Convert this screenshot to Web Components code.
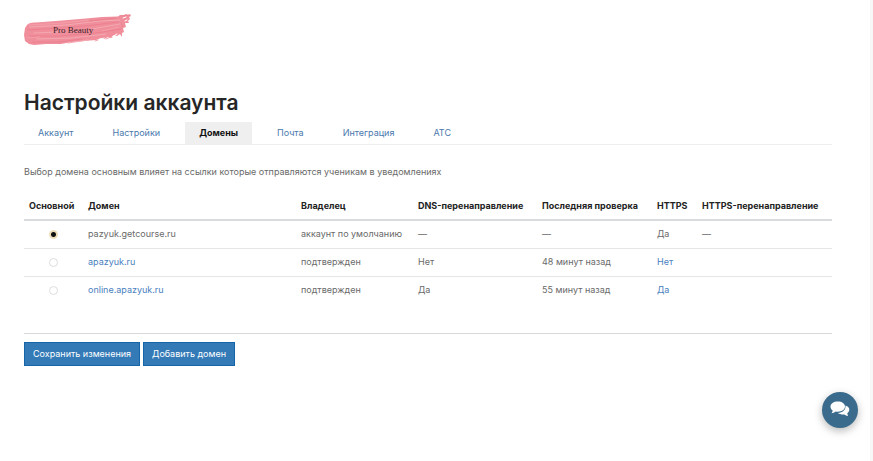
<!DOCTYPE html>
<html lang="ru">
<head>
<meta charset="utf-8">
<title>Настройки аккаунта</title>
<style>
  html { background: #fff; }
  body { margin: 0; font: 9px/14px Inter, "Open Sans", sans-serif; color: #6a6a6a; }
</style>
</head>
<body>
<account-page>
  <brand-logo slot="logo"></brand-logo>
  <page-tabs></page-tabs>
  <page-note>Выбор домена основным влияет на ссылки которые отправляются ученикам в уведомлениях</page-note>
  <domain-table></domain-table>
  <action-row>
    <action-button>Сохранить изменения</action-button>
    <action-button>Добавить домен</action-button>
  </action-row>
  <chat-button slot="chat"></chat-button>
</account-page>

<script>
const define = (name, html) => customElements.define(name, class extends HTMLElement {
  constructor() {
    super();
    const t = document.createElement('template');
    t.innerHTML = html;
    this.attachShadow({ mode: 'open' }).append(t.content.cloneNode(true));
  }
});

define('brand-logo', `
<style>
  :host { display: block; }
  a { display: grid; width: 110px; height: 36px; text-decoration: none; color: #3a2228; }
  svg, span { grid-area: 1 / 1; }
  span { font: 9px/34px "Liberation Serif", serif; padding-left: 29px; z-index: 1; }
</style>
<a href="#"><svg width="110" height="36" viewBox="0 0 110 36" aria-hidden="true">
  <path fill="#f08f9b" d="M3 12 Q5 9 12 9.500 L32 8 L62 5.500 L78 4 L94 3.500 L96 2 L100 2 L102 1 L104 2 L106 1 L107 3 L105 4 L106 6 L104 8 L105 10 L101 10 L102 14 L99 15 L100 19 L98 20 L98 24 L96 21 L93 23 L90 22 L88 25 L84 24 L80 26 L77 25 L72 27 L60 28 L48 29 L37 31 L22 31 L10 32 L5 31 L1 28 L0 22 L1 15 Z"/>
  <g fill="none" stroke-linecap="round">
    <path stroke="#f4a9b2" d="M6 14 L42 12 L76 8 L96 7 M10 20 L34 19 M68 16 L96 11 M13 26 L48 25 L82 21 M44 30 L64 27"/>
    <path stroke="#ec8090" d="M4 17 L38 15 L70 12 L94 9 M6 23 L34 23 L72 20 L97 16 M8 29 L34 29 L58 26 M66 8 L92 5"/>
    <path stroke="#f39fab" d="M5 12 L38 10 L64 7 M3 25 L16 24 M78 18 L95 14"/>
    <path stroke="#fff" d="M99 5 L102 4 M101 8 L103 7 M88 24 L93 21 M76 27 L80 25"/>
    <path stroke="#ee7e8d" stroke-width=".7" d="M98 3 L105 2 M97 10 L99 14 M82 26 L87 24 M71 28 L74 27"/>
  </g>
</svg><span>Pro Beauty</span></a>`);

define('page-tabs', `
<style>
  :host { display: block; border-bottom: 1px solid #eee; }
  nav { display: flex; gap: 11px; }
  a { padding: 0 14px; line-height: 22px; color: #4a79ad; text-decoration: none; }
  a[aria-current] { background: #f0eff0; color: #111; font-weight: 700; }
</style>
<nav>
  <a href="#">Аккаунт</a><a href="#">Настройки</a><a href="#" aria-current="page">Домены</a><a href="#">Почта</a><a href="#">Интеграция</a><a href="#">АТС</a>
</nav>`);

define('page-note', `
<style>:host { display: block; margin: 20px 0 13px; } p { margin: 0; }</style>
<p><slot></slot></p>`);

define('domain-table', `
<style>
  :host { display: block; }
  table { width: 100%; border-collapse: collapse; table-layout: fixed; }
  th, td { padding: 6px 5px 7px; text-align: left; white-space: nowrap; }
  th { padding: 7px 5px 6px; color: #222; font-weight: 700; border-bottom: 2px solid #d8dcdc; }
  td { border-bottom: 1px solid #e4e6e8; }
  tr:last-child td { border-bottom: 0; }
  td:first-child { text-align: center; }
  a { color: #4a7fc0; text-decoration: none; }
  input { appearance: none; display: block; box-sizing: border-box; width: 9px; height: 9px;
    margin: 0 auto; border: 1px solid #ddd; border-radius: 50%; background: #fff; }
  input:checked { border-color: #ecdcb8; background: radial-gradient(circle, #111 0 2px, #ecdcb8 3px); }
</style>
<table>
  <colgroup><col style="width:59px"><col><col style="width:117px"><col style="width:124px"><col style="width:115px"><col style="width:45px"><col style="width:135px"></colgroup>
  <thead><tr><th>Основной</th><th>Домен</th><th>Владелец</th><th>DNS-перенаправление</th><th>Последняя проверка</th><th>HTTPS</th><th>HTTPS-перенаправление</th></tr></thead>
  <tbody>
    <tr><td><input type="radio" name="main" aria-label="pazyuk.getcourse.ru" checked></td><td>pazyuk.getcourse.ru</td><td>аккаунт по умолчанию</td><td>—</td><td>—</td><td>Да</td><td>—</td></tr>
    <tr><td><input type="radio" name="main" aria-label="apazyuk.ru"></td><td><a href="#">apazyuk.ru</a></td><td>подтвержден</td><td>Нет</td><td>48 минут назад</td><td><a href="#">Нет</a></td><td></td></tr>
    <tr><td><input type="radio" name="main" aria-label="online.apazyuk.ru"></td><td><a href="#">online.apazyuk.ru</a></td><td>подтвержден</td><td>Да</td><td>55 минут назад</td><td><a href="#">Да</a></td><td></td></tr>
  </tbody>
</table>`);

define('action-row', `
<style>
  :host { display: flex; gap: 3px; margin-top: 29px; padding-top: 8px; border-top: 1px solid #d8d8d8; }
</style>
<slot></slot>`);

define('action-button', `
<style>
  :host { display: block; }
  button { font: inherit; line-height: 22px; padding: 0 8px; color: #fff; background: #337ab7;
    border: 1px solid #1565a8; border-radius: 0; cursor: pointer; display: block; }
</style>
<button type="button"><slot></slot></button>`);

define('chat-button', `
<style>
  :host { display: block; }
  button { display: grid; place-items: center; width: 36px; height: 36px; padding: 0; border: 0;
    border-radius: 50%; background: #3a6a8c; box-shadow: 0 3px 8px rgba(0,0,0,.28); cursor: pointer; }
</style>
<button type="button" aria-label="Чат"><svg width="20" height="18" viewBox="0 0 20 18" aria-hidden="true">
  <path fill="#fff" d="M15.500 4.500 C18 5.300 19.300 6.800 19.300 8.700 C19.300 10 18.500 11.200 17.300 12 C17.400 13.200 17.700 14 18 15 C16.500 14.800 15.300 14.200 14.300 13.400 C12 13.700 9.500 13.200 8 12 C12.500 11.600 16 9 15.500 4.500 Z"/>
  <path fill="#fff" d="M7.800 .5 C12 .5 15 2.600 15 5.600 C15 8.600 12 10.700 7.800 10.700 C7 10.700 6.200 10.600 5.500 10.500 C4.400 11.500 3 12.100 1.500 12.200 C2.200 11.400 2.600 10.500 2.700 9.500 C1.200 8.600 .5 7.200 .5 5.600 C.5 2.600 3.600 .5 7.800 .5 Z"/>
</svg></button>`);

define('account-page', `
<style>
  :host { display: block; box-sizing: border-box; min-height: 100vh; padding: 13px 38px 24px 24px;
    border-right: 3px solid #f7f7f7; }
  h1 { margin: 41px 0 6px; font-size: 21px; line-height: 26px; font-weight: 600; color: #262626; }
  .chat { position: fixed; right: 15px; bottom: 33px; }
</style>
<slot name="logo"></slot>
<h1>Настройки аккаунта</h1>
<slot></slot>
<div class="chat"><slot name="chat"></slot></div>`);
</script>
</body>
</html>
